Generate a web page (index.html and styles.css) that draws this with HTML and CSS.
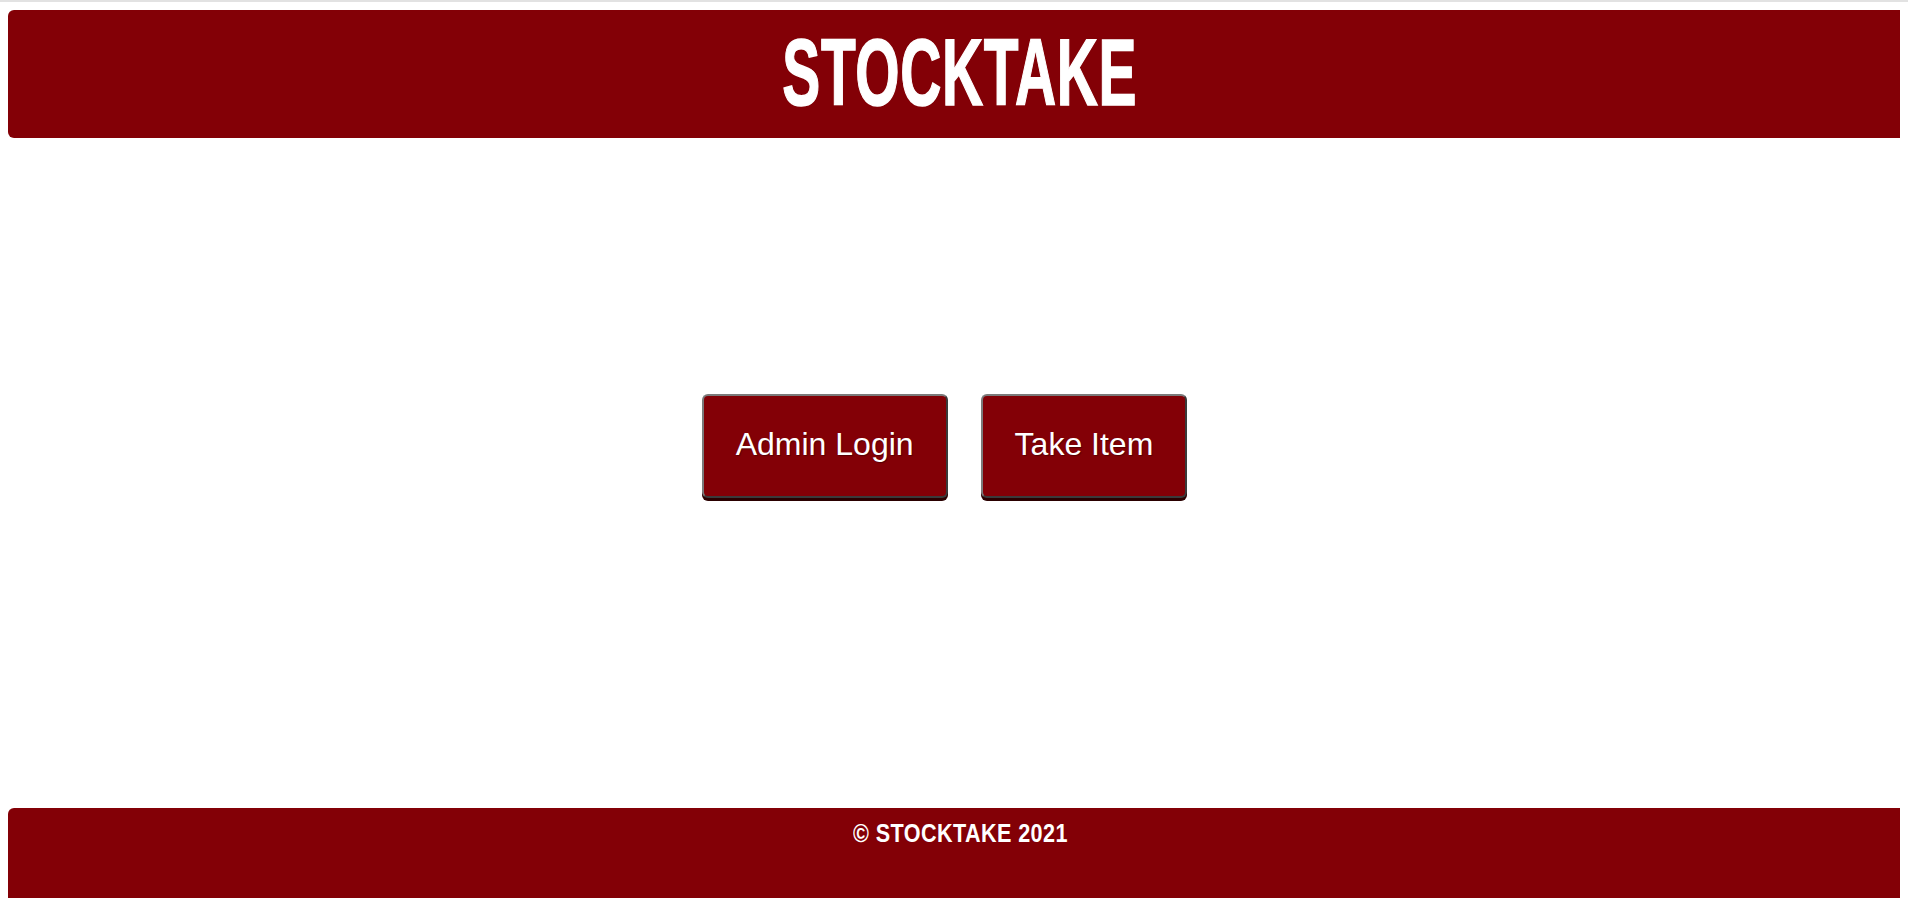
FILE: index.html
```html
<!DOCTYPE html>
<html lang="en">
<head>
<meta charset="utf-8">
<title>Stocktake</title>
<link rel="stylesheet" href="styles.css">
</head>
<body>
<header class="site-header">
  <h1 class="brand"><span class="brand-text">STOCKTAKE</span></h1>
</header>
<main class="home">
  <div class="actions">
    <button class="btn" type="button">Admin Login</button>
    <button class="btn" type="button">Take Item</button>
  </div>
</main>
<footer class="site-footer">
  <p class="copy"><span class="copy-text">© STOCKTAKE 2021</span></p>
</footer>
</body>
</html>
```

FILE: styles.css
```css
html {
  border-top: 2px solid #e2e2e2;
  height: 100%;
  overflow: hidden;
}
body {
  margin: 8px;
  font-family: "Liberation Sans", Arial, sans-serif;
  background: #fff;
}
.site-header {
  width: calc(100vw - 8px);
  height: 128px;
  padding-left: 4px;
  box-sizing: border-box;
  background: #830006;
  border-radius: 6px;
  display: flex;
  align-items: center;
  justify-content: center;
}
.brand {
  margin: 0;
  color: #fff;
  font-size: 95px;
  font-weight: 700;
  line-height: 1;
  margin-top: -4px;
}
.brand-text {
  display: inline-block;
  transform: scaleX(0.6);
  letter-spacing: 1px;
  white-space: nowrap;
  -webkit-text-stroke: 1.5px #fff;
}
.home {
  width: calc(100vw - 8px);
  padding: 256px 0 310px 6px;
  box-sizing: border-box;
}
.actions {
  display: flex;
  justify-content: center;
}
.btn {
  height: 104px;
  margin: 0 33px 0 0;
  padding: 0 32px 3px;
  background: #830006;
  color: #fff;
  font-family: "Liberation Sans", Arial, sans-serif;
  font-size: 32px;
  border: 2px solid;
  border-color: #7a7a7a #3a3a3a #3a3a3a #7a7a7a;
  border-radius: 6px;
  box-shadow: 0 3px 0 #2a0000;
  text-shadow: 1px 1px 1px rgba(0, 0, 0, 0.35);
  cursor: pointer;
}
.site-footer {
  width: calc(100vw - 8px);
  height: 120px;
  background: #830006;
  border-radius: 6px 6px 0 0;
  padding: 11px 0 0 5px;
  box-sizing: border-box;
}
.copy {
  margin: 0;
  text-align: center;
  color: #fff;
  font-size: 26px;
  font-weight: 700;
  line-height: 28px;
}
.copy-text {
  display: inline-block;
  transform: scaleX(0.83);
  letter-spacing: 0.5px;
  white-space: nowrap;
}
```
